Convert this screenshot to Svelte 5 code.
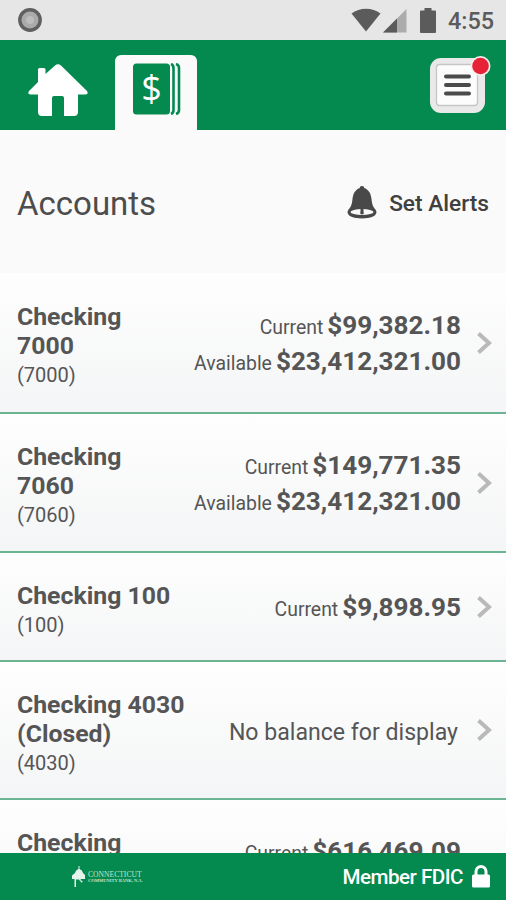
<script>
  const accounts = [
    { name: ['Checking', '7000'], number: '7000', height: 141, current: '$99,382.18', available: '$23,412,321.00' },
    { name: ['Checking', '7060'], number: '7060', height: 139, current: '$149,771.35', available: '$23,412,321.00' },
    { name: ['Checking 100'], number: '100', height: 109, current: '$9,898.95' },
    { name: ['Checking 4030', '(Closed)'], number: '4030', height: 138 },
    { name: ['Checking', '8000'], number: '8000', height: 139, current: '$616,469.09', available: '$616,469.09' }
  ];
</script>

<div class="screen">
  <!-- Status bar -->
  <div class="status-bar">
    <svg class="record" viewBox="0 0 24 24">
      <circle cx="12" cy="12" r="10.2" fill="#aaa" stroke="#606060" stroke-width="3.4" />
      <circle cx="12" cy="12" r="4" fill="#bdbdbd" />
    </svg>
    <div class="status-right">
      <svg class="wifi" viewBox="0 0 30 24">
        <path d="M0.500 5.500C8.500-1 21.500-1 29.500 5.500L15 23.500Z" fill="#5b5b5b" />
      </svg>
      <svg class="signal" viewBox="0 0 24 24">
        <path d="M0 23.500L23.500 0v23.500z" fill="#acacac" />
        <path d="M0 23.500L14 9.500v14z" fill="#5b5b5b" />
      </svg>
      <svg class="battery" viewBox="0 0 16 25">
        <path d="M4.500 0h7v2.500H15a1 1 0 011 1V24a1 1 0 01-1 1H1a1 1 0 01-1-1V3.500a1 1 0 011-1h3.500z" fill="#5b5b5b" />
      </svg>
      <span class="time">4:55</span>
    </div>
  </div>

  <!-- Navigation -->
  <nav class="nav">
    <button class="home" aria-label="Home">
      <svg viewBox="0 0 60 53" fill="#fff">
        <path d="M10 5.500Q10 4 11.500 4H16q1.500 0 1.500 1.500V10L27 1.500Q30-1 33 1.500L59 27q2 3.500-1.500 3.500H50V48q0 4-4 4H36V34q0-2-2-2H26q-2 0-2 2V52H14q-4 0-4-4V30.500H2.500Q-1 30.500 1 27L10 18z" />
      </svg>
    </button>
    <button class="tab" aria-label="Accounts">
      <svg viewBox="0 0 48 52">
        <rect x="0" y="0.500" width="37" height="51" rx="3.500" fill="#04894f" />
        <path d="M38 1q2.500 1 2.500 4v42q0 3-2.500 4M43 1q3 1 3 4v42q0 3-3 4" fill="none" stroke="#04894f" stroke-width="2.600" />
        <text x="18.500" y="38" text-anchor="middle">$</text>
      </svg>
    </button>
    <button class="menu" aria-label="Menu">
      <svg viewBox="0 0 64 60">
        <rect x="1" y="3" width="55" height="55" rx="11" fill="#e9e9e9" />
        <rect x="7.500" y="9.500" width="41" height="41" rx="3" fill="#fcfcfc" stroke="#c6c6c6" stroke-width="1.300" />
        <path d="M17 19.500h23M17 28h23M17 36.500h23" stroke="#4b4b4b" stroke-width="4" stroke-linecap="round" transform="translate(0 2)" />
        <circle cx="51.500" cy="11" r="10" fill="#f4eeec" />
        <circle cx="51.500" cy="11" r="8.300" fill="#e62238" />
      </svg>
    </button>
  </nav>

  <!-- Title -->
  <header class="title-bar">
    <h1>Accounts</h1>
    <button class="alerts">
      <svg viewBox="0 0 30 33">
        <path d="M15 0c1.600 0 2.200.8 2.200 2C22.500 4 24 8.500 24.500 13c.6 6 2 8.500 4 10.500 3.500 5.500-3 9-13.500 9s-17-3.500-13.500-9c2-2 3.400-4.500 4-10.500C6 8.500 7.500 4 12.800 2c0-1.200.6-2 2.200-2z" fill="#494949" />
        <ellipse cx="15" cy="26" rx="11.500" ry="3" fill="#fafafa" />
        <path d="M13.500 22.500h3v3q1 3-1.500 3t-1.500-3z" fill="#494949" />
      </svg>
      <span>Set Alerts</span>
    </button>
  </header>

  <!-- Account list -->
  <main class="accounts">
    {#each accounts as account}
      <div class="account" style="height: {account.height}px">
        <div class="account-name">
          {#each account.name as line}
            <strong>{line}</strong>
          {/each}
          <span>({account.number})</span>
        </div>
        <div class="balances">
          {#if account.current}
            <p><span>Current</span><b>{account.current}</b></p>
            {#if account.available}
              <p><span>Available</span><b>{account.available}</b></p>
            {/if}
          {:else}
            <p class="empty">No balance for display</p>
          {/if}
        </div>
        <svg class="chevron" viewBox="0 0 16 24">
          <path d="M2.500 2.500L13 12 2.500 21.500" fill="none" stroke="#b9b9b9" stroke-width="4" />
        </svg>
      </div>
    {/each}
  </main>

  <!-- Footer -->
  <footer class="footer">
    <div class="brand">
      <svg viewBox="0 0 14 22" fill="#e4f3eb">
        <path d="M6.500 0h1v3q3 1 3.500 4l2 2v4H8.500l.5 1.500-1 .5-1-1.500H4V21H2.500v-8H0V9.500L3 7q.5-3 3.500-4z" />
        <circle cx="9.500" cy="15.500" r="1" />
      </svg>
      <div class="brand-text">
        <span class="brand-name">CONNECTICUT</span>
        <span class="brand-sub">COMMUNITY BANK, N.A.</span>
      </div>
    </div>
    <div class="fdic">
      <span>Member FDIC</span>
      <svg viewBox="0 0 18 23">
        <path d="M4 11V6.500a5 5 0 0110 0V11" fill="none" stroke="#fff" stroke-width="3" />
        <rect x="0" y="9.500" width="18" height="13" rx="1.500" fill="#fff" />
      </svg>
    </div>
  </footer>
</div>

<style>
  :global(body) {
    margin: 0;
  }

  .screen {
    display: flex;
    flex-direction: column;
    width: 506px;
    height: 900px;
    overflow: hidden;
    background: #fafafa;
    color: #4d4d4d;
    font-family: Roboto, sans-serif;
  }

  button {
    padding: 0;
    border: none;
    background: none;
    color: inherit;
    font: inherit;
  }

  svg {
    display: block;
    flex-shrink: 0;
  }

  /* Status bar */
  .status-bar {
    display: flex;
    flex-shrink: 0;
    justify-content: space-between;
    box-sizing: border-box;
    height: 40px;
    padding: 8px 12px 0 18px;
    background: #e6e6e6;
  }

  .record {
    width: 24px;
    height: 24px;
  }

  .status-right {
    display: flex;
  }

  .wifi {
    width: 30px;
    height: 24px;
    margin-right: 2px;
  }

  .signal {
    width: 24px;
    height: 24px;
    margin: 1px 13px 0 0;
  }

  .battery {
    width: 16px;
    height: 25px;
    margin-right: 12px;
  }

  .time {
    color: #5b5b5b;
    font-size: 23.4px;
    font-weight: 500;
    line-height: 27px;
  }

  /* Navigation */
  .nav {
    display: flex;
    flex-shrink: 0;
    box-sizing: border-box;
    height: 90px;
    padding: 15px 13px 0 28px;
    background: #04894f;
  }

  .home {
    align-self: flex-start;
    margin: 9px 27px 0 0;
  }

  .home svg {
    width: 60px;
    height: 53px;
  }

  .tab {
    display: flex;
    justify-content: center;
    width: 82px;
    padding: 8px 0 0 2px;
    box-sizing: border-box;
    border-radius: 6px 6px 0 0;
    background: #fafafa;
  }

  .tab svg {
    width: 48px;
    height: 52px;
  }

  .tab text {
    fill: #fff;
    font-family: 'Open Sans', sans-serif;
    font-size: 36px;
  }

  .menu {
    align-self: flex-start;
    margin-left: auto;
  }

  .menu svg {
    width: 64px;
    height: 60px;
  }

  /* Title */
  .title-bar {
    display: flex;
    flex-shrink: 0;
    align-items: center;
    justify-content: space-between;
    box-sizing: border-box;
    height: 143px;
    padding: 0 17px;
  }

  h1 {
    margin: 4px 0 0;
    font-size: 33px;
    font-weight: 400;
    line-height: 40px;
  }

  .alerts {
    display: flex;
    align-items: center;
    gap: 12px;
    color: #404040;
    font-size: 22.7px;
    font-weight: 500;
    line-height: 28px;
  }

  .alerts svg {
    width: 30px;
    height: 33px;
    margin-top: 2px;
  }

  .alerts span {
    margin-top: 5px;
  }

  /* Account list */
  .accounts {
    flex: 1;
    min-height: 0;
    overflow: hidden;
  }

  .account {
    display: flex;
    align-items: center;
    box-sizing: border-box;
    padding: 0 14px 0 17px;
    border-bottom: 2px solid #6bb594;
    background: linear-gradient(#fefefe, #f4f5f6);
    color: #555;
  }

  .account-name {
    display: flex;
    flex-direction: column;
    padding-top: 7px;
  }

  .account-name strong {
    font-size: 24.8px;
    font-weight: 700;
    line-height: 29px;
    white-space: nowrap;
  }

  .account-name span {
    font-size: 20px;
    line-height: 30px;
  }

  .balances {
    margin-left: auto;
    padding-top: 6px;
    text-align: right;
    white-space: nowrap;
  }

  .balances p {
    margin: 0;
    font-size: 19.4px;
    line-height: 35.5px;
  }

  .balances b {
    margin-left: 4px;
    font-size: 26.1px;
    font-weight: 700;
    line-height: 30px;
  }

  .balances .empty {
    padding-right: 3px;
    font-size: 23.1px;
    line-height: 32px;
  }

  .chevron {
    width: 16px;
    height: 24px;
    margin-left: 15px;
  }

  /* Footer */
  .footer {
    display: flex;
    flex-shrink: 0;
    align-items: center;
    justify-content: space-between;
    box-sizing: border-box;
    height: 47px;
    padding: 0 16px 0 72px;
    background: #04894f;
    color: #fff;
  }

  .brand {
    display: flex;
    align-items: center;
    gap: 2px;
  }

  .brand svg {
    width: 14px;
    height: 22px;
  }

  .brand-text {
    display: flex;
    flex-direction: column;
    color: #c4e4d4;
    font-family: 'Liberation Serif', serif;
    white-space: nowrap;
  }

  .brand-name {
    font-size: 7.6px;
    line-height: 7px;
  }

  .brand-sub {
    font-size: 4.5px;
    font-weight: 700;
    line-height: 5px;
  }

  .fdic {
    display: flex;
    align-items: center;
    gap: 9px;
    font-size: 20.6px;
    font-weight: 500;
    letter-spacing: -0.5px;
  }

  .fdic svg {
    width: 18px;
    height: 23px;
  }
</style>
